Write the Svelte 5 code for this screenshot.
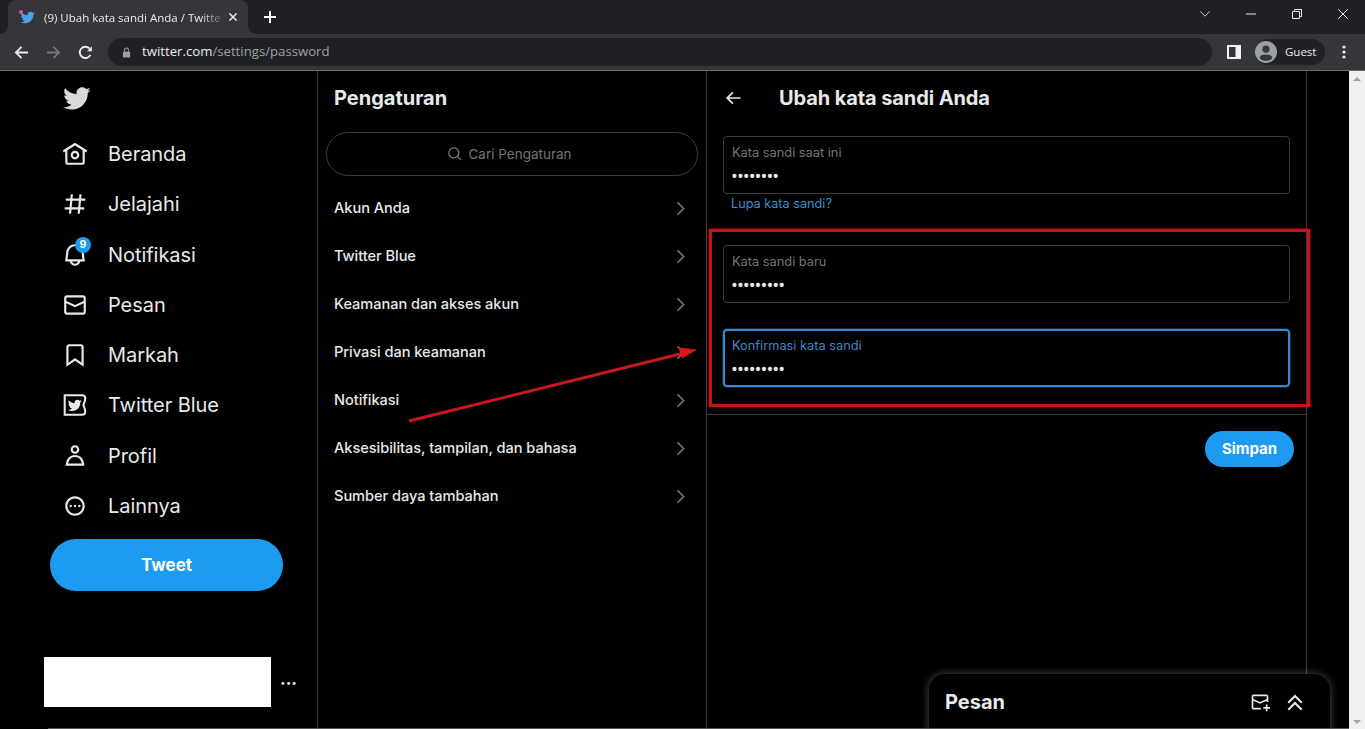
<script>
  const bird = "M23.643 4.937c-.835.37-1.732.62-2.675.733.962-.576 1.7-1.49 2.048-2.578-.9.534-1.897.922-2.958 1.13-.85-.904-2.06-1.47-3.4-1.47-2.572 0-4.658 2.086-4.658 4.66 0 .364.042.718.12 1.06-3.873-.195-7.304-2.05-9.602-4.868-.4.69-.63 1.49-.63 2.342 0 1.616.823 3.043 2.072 3.878-.764-.025-1.482-.234-2.11-.583v.06c0 2.257 1.605 4.14 3.737 4.568-.392.106-.803.162-1.227.162-.3 0-.593-.028-.877-.082.593 1.85 2.313 3.198 4.352 3.234-1.595 1.25-3.604 1.995-5.786 1.995-.376 0-.747-.022-1.112-.065 2.062 1.323 4.51 2.093 7.14 2.093 8.57 0 13.255-7.098 13.255-13.254 0-.2-.005-.402-.014-.602.91-.658 1.7-1.477 2.323-2.41z";
  const nav = [
    { label: "Beranda", d: "M12 9c-2.209 0-4 1.791-4 4s1.791 4 4 4 4-1.791 4-4-1.791-4-4-4zm0 6c-1.105 0-2-.895-2-2s.895-2 2-2 2 .895 2 2-.895 2-2 2zm0-13.304L.622 8.807l1.06 1.696L3 9.679V19.5C3 20.881 4.119 22 5.5 22h13c1.381 0 2.5-1.119 2.5-2.5V9.679l1.318.824 1.06-1.696L12 1.696zM19 19.5c0 .276-.224.5-.5.5h-13c-.276 0-.5-.224-.5-.5V8.429l7-4.375 7 4.375V19.5z" },
    { label: "Jelajahi", d: "M10.09 3.098L9.72 7h5.99l.39-4.089 1.99.187L17.72 7h3.78v2h-3.97l-.56 6h3.53v2h-3.72l-.38 4.089-1.99-.187.36-3.902H8.78l-.38 4.089-1.99-.187L6.77 17H2.5v-2h4.46l.56-6H3.5V7h4.21l.39-4.089 1.99.187zM14.96 15l.56-6H9.53l-.56 6h5.99z" },
    { label: "Notifikasi", badge: "9", d: "M19.993 9.042C19.48 5.017 16.054 2 11.996 2s-7.49 3.021-7.999 7.051L2.866 18H7.1c.463 2.282 2.481 4 4.9 4s4.437-1.718 4.9-4h4.236l-1.143-8.958zM12 20c-1.306 0-2.417-.835-2.829-2h5.658c-.412 1.165-1.523 2-2.829 2zm-6.866-4l.847-6.698C6.364 6.272 8.941 4 11.996 4s5.627 2.268 6.013 5.295L18.864 16H5.134z" },
    { label: "Pesan", d: "M1.998 5.5c0-1.381 1.119-2.5 2.5-2.5h15c1.381 0 2.5 1.119 2.5 2.5v13c0 1.381-1.119 2.5-2.5 2.5h-15c-1.381 0-2.5-1.119-2.5-2.5v-13zm2.5-.5c-.276 0-.5.224-.5.5v2.764l8 3.638 8-3.636V5.5c0-.276-.224-.5-.5-.5h-15zm15.5 5.463l-8 3.636-8-3.638V18.5c0 .276.224.5.5.5h15c.276 0 .5-.224.5-.5v-8.037z" },
    { label: "Markah", d: "M4 4.5C4 3.12 5.119 2 6.5 2h11C18.881 2 20 3.12 20 4.5v18.44l-8-5.71-8 5.71V4.5zM6.5 4c-.276 0-.5.22-.5.5v14.56l6-4.29 6 4.29V4.5c0-.28-.224-.5-.5-.5h-11z" },
    { label: "Twitter Blue", blue: true, d: "" },
    { label: "Profil", d: "M5.651 19h12.698c-.337-1.8-1.023-3.21-1.945-4.19C15.318 13.65 13.838 13 12 13s-3.317.65-4.404 1.81c-.922.98-1.608 2.39-1.945 4.19zm.486-5.56C7.627 11.85 9.648 11 12 11s4.373.85 5.863 2.44c1.477 1.58 2.366 3.8 2.632 6.46l.11 1.1H3.395l.11-1.1c.266-2.66 1.155-4.88 2.632-6.46zM12 4c-1.105 0-2 .9-2 2s.895 2 2 2 2-.9 2-2-.895-2-2-2zM8 6c0-2.21 1.791-4 4-4s4 1.79 4 4-1.791 4-4 4-4-1.79-4-4z" },
    { label: "Lainnya", more: true, d: "M3 12c0-4.97 4.029-9 9-9s9 4.03 9 9-4.029 9-9 9-9-4.03-9-9zm9-7c-3.866 0-7 3.13-7 7s3.134 7 7 7 7-3.13 7-7-3.134-7-7-7z" }
  ];
  const settings = ["Akun Anda", "Twitter Blue", "Keamanan dan akses akun", "Privasi dan keamanan", "Notifikasi", "Aksesibilitas, tampilan, dan bahasa", "Sumber daya tambahan"];
</script>

<div class="window">
  <div class="tabstrip">
    <div class="tab">
      <span class="favicon">
        <svg viewBox="0 0 24 24" width="15" height="15"><path fill="#4aa3e8" d={bird} /></svg>
        <i class="dot"></i>
      </span>
      <span class="tabtitle">(9) Ubah kata sandi Anda / Twitte</span>
      <svg class="tabx" viewBox="0 0 8 8" width="8" height="8"><path d="M.4.4l7.2 7.2M7.6.4L.4 7.6" stroke="#e8eaed" stroke-width="1.5" /></svg>
    </div>
    <svg class="newtab" viewBox="0 0 12 12" width="12" height="12"><path d="M6 0v12M0 6h12" stroke="#fff" stroke-width="2" /></svg>
    <div class="winctl">
      <svg viewBox="0 0 10 6" width="10" height="6"><path d="M.4.4L5 5.2 9.6.4" fill="none" stroke="#c4c7c9" stroke-width="1" /></svg>
      <svg viewBox="0 0 10 2" width="10" height="2"><path d="M0 1h10" stroke="#e8eaed" stroke-width="1" /></svg>
      <svg viewBox="0 0 10 10" width="10" height="10"><path d="M.5 2.5h7v7h-7zM2.5 2.5v-2h7v7h-2" fill="none" stroke="#e8eaed" stroke-width="1" /></svg>
      <svg viewBox="0 0 10 10" width="10" height="10"><path d="M.2.2l9.6 9.6M9.8.2L.2 9.8" stroke="#e8eaed" stroke-width="1" /></svg>
    </div>
  </div>
  <div class="toolbar">
    <svg class="tool" viewBox="0 0 16 16" width="15" height="15"><path d="M15 8H2M8 2L2 8l6 6" fill="none" stroke="#e8eaed" stroke-width="1.9" /></svg>
    <svg class="tool" viewBox="0 0 16 16" width="15" height="15"><path d="M1 8h13M8 2l6 6-6 6" fill="none" stroke="#75777a" stroke-width="1.9" /></svg>
    <svg class="tool" viewBox="0 0 16 16" width="15" height="15"><path d="M13.3 10.5A6 6 0 1 1 12.3 3.8" fill="none" stroke="#e8eaed" stroke-width="2" /><path d="M9.6 6.6h5.2V1.4z" fill="#e8eaed" /></svg>
    <div class="omnibox">
      <svg viewBox="0 0 10 12" width="9" height="11"><path d="M1 5h8v6.5H1z" fill="#9aa0a6" /><path d="M2.8 5V3.2a2.2 2.2 0 0 1 4.4 0V5" fill="none" stroke="#9aa0a6" stroke-width="1.2" /></svg>
      <span class="url"><b>twitter.com</b>/settings/password</span>
    </div>
    <svg class="panelbtn" viewBox="0 0 14 14" width="14" height="14"><path d="M0 0h14v14H0z" fill="#f1f3f4" /><path d="M2 2h6.5v10H2z" fill="#35363a" /></svg>
    <div class="guest">
      <svg viewBox="0 0 22 22" width="22" height="22"><circle cx="11" cy="11" r="11" fill="#9aa0a6" /><circle cx="11" cy="8.2" r="3.6" fill="#35363a" /><ellipse cx="11" cy="16.6" rx="6.2" ry="3.2" fill="#35363a" /></svg>
      <span>Guest</span>
    </div>
    <svg class="dots" viewBox="0 0 4 14" width="4" height="14"><circle cx="2" cy="2" r="1.6" fill="#e8eaed" /><circle cx="2" cy="7" r="1.6" fill="#e8eaed" /><circle cx="2" cy="12" r="1.6" fill="#e8eaed" /></svg>
  </div>

  <div class="viewport">
    <div class="page">
      <aside class="sidebar">
        <svg class="logo" viewBox="0 0 24 24" width="29" height="29"><path fill="#d9d9d9" d={bird} /></svg>
        <nav>
          {#each nav as item}
            <div class="navitem">
              <span class="navicon">
                {#if item.blue}
                  <svg viewBox="0 0 24 24" width="26" height="26">
                    <path d="M2.5 3H18.5c2 0 3 1.4 3 3 0 2-1 4-1.8 6 .8 2 1.8 4 1.8 6 0 1.6-1 3-3 3H2.5z" fill="none" stroke="#e7e9ea" stroke-width="1.9" />
                    <g transform="translate(4.9 5.6) scale(.56)"><path fill="#e7e9ea" d={bird} /></g>
                  </svg>
                {:else}
                  <svg viewBox="0 0 24 24" width="26" height="26">
                    <path fill="#e7e9ea" d={item.d} />
                    {#if item.more}
                      <circle cx="8" cy="12" r="1.1" fill="#e7e9ea" /><circle cx="12" cy="12" r="1.1" fill="#e7e9ea" /><circle cx="16" cy="12" r="1.1" fill="#e7e9ea" />
                    {/if}
                  </svg>
                {/if}
                {#if item.badge}<i class="badge">{item.badge}</i>{/if}
              </span>
              <span class="navlabel">{item.label}</span>
            </div>
          {/each}
        </nav>
        <div class="tweet">Tweet</div>
        <div class="account">
          <div class="redacted"></div>
          <span class="ellipsis">···</span>
        </div>
      </aside>

      <section class="middle">
        <h2 class="midtitle">Pengaturan</h2>
        <div class="search">
          <svg viewBox="0 0 24 24" width="16" height="16"><path d="M10.25 3.75a6.5 6.5 0 1 0 0 13 6.5 6.5 0 0 0 0-13zM1.75 10.25a8.5 8.5 0 1 1 15.1 5.36l4.9 4.9-1.41 1.41-4.9-4.9A8.5 8.5 0 0 1 1.75 10.25z" fill="#71767b" /></svg>
          <span>Cari Pengaturan</span>
        </div>
        <ul class="list">
          {#each settings as s}
            <li>
              <span>{s}</span>
              <svg viewBox="0 0 24 24" width="19" height="19"><path d="M14.586 12L7.543 4.96l1.414-1.42L17.414 12l-8.457 8.46-1.414-1.42L14.586 12z" fill="#71767b" /></svg>
            </li>
          {/each}
        </ul>
      </section>

      <section class="detail">
        <header class="dhead">
          <svg viewBox="0 0 24 24" width="20" height="20"><path d="M7.414 13l5.043 5.04-1.414 1.42L3.586 12l7.457-7.46 1.414 1.42L7.414 11H21v2H7.414z" fill="#e7e9ea" /></svg>
          <h2>Ubah kata sandi Anda</h2>
        </header>
        <div class="form">
          <div class="field">
            <label for="p1">Kata sandi saat ini</label>
            <span id="p1" class="pw">••••••••</span>
          </div>
          <a class="forgot" href="#top">Lupa kata sandi?</a>
          <div class="field second">
            <label for="p2">Kata sandi baru</label>
            <span id="p2" class="pw">•••••••••</span>
          </div>
          <div class="field focus">
            <label for="p3">Konfirmasi kata sandi</label>
            <span id="p3" class="pw">•••••••••</span>
          </div>
        </div>
        <div class="actions"><div class="save">Simpan</div></div>
      </section>
    </div>
    <div class="scrollbar">
      <i class="up"></i>
      <i class="down"></i>
    </div>
  </div>

  <div class="drawer">
    <h3>Pesan</h3>
    <svg class="compose" viewBox="0 0 24 24" width="20" height="20"><path d="M1.998 5.5c0-1.381 1.119-2.5 2.5-2.5h15c1.381 0 2.5 1.119 2.5 2.5V12h-2v-1.537l-8 3.635-8-3.635V18.5c0 .276.224.5.5.5H13v2H4.498c-1.381 0-2.5-1.119-2.5-2.5v-13zm2 2.766l8 3.635 8-3.635V5.5c0-.276-.224-.5-.5-.5h-15c-.276 0-.5.224-.5.5v2.766zM19 18v-3h2v3h3v2h-3v3h-2v-3h-3v-2h3z" fill="#e7e9ea" /></svg>
    <svg viewBox="0 0 24 24" width="24" height="24"><path d="M12 3.59l7.457 7.45-1.414 1.42L12 6.41l-6.043 6.05-1.414-1.42L12 3.59zm0 7l7.457 7.45-1.414 1.42L12 13.41l-6.043 6.05-1.414-1.42L12 10.59z" fill="#e7e9ea" /></svg>
  </div>

  <div class="redbox"></div>
  <svg class="arrow" viewBox="0 0 1365 729" width="1365" height="729">
    <path d="M409 421L682 353.5" stroke="#c8181b" stroke-width="3" />
    <path d="M697 349.5L678.5 347.5 682 358.5z" fill="#d9161a" />
  </svg>
  <div class="edge"></div>
</div>

<style>
  :global(body) { margin: 0; background: #000; }
  .window {
    position: relative;
    width: 1365px;
    height: 729px;
    overflow: hidden;
    display: flex;
    flex-direction: column;
    background: #000;
    font-family: Inter, "Liberation Sans", sans-serif;
    color: #e7e9ea;
  }
  .tabstrip {
    height: 34px;
    flex: none;
    background: #202124;
    display: flex;
    align-items: center;
    padding-left: 8px;
    box-sizing: border-box;
  }
  .tab {
    position: relative;
    width: 240px;
    height: 34px;
    flex: none;
    background: #35363a;
    border-radius: 8px 8px 0 0;
    display: flex;
    align-items: center;
    padding: 0 12px;
    box-sizing: border-box;
  }
  .tab::before, .tab::after {
    content: "";
    position: absolute;
    bottom: 0;
    width: 8px;
    height: 8px;
  }
  .tab::before { left: -8px; background: radial-gradient(circle at 0 0, transparent 7.5px, #35363a 8px); }
  .tab::after { right: -8px; background: radial-gradient(circle at 100% 0, transparent 7.5px, #35363a 8px); }
  .favicon { position: relative; display: flex; width: 15px; margin-right: 9px; }
  .dot {
    position: absolute; left: -1px; top: 0; width: 4px; height: 4px;
    border-radius: 50%; background: #d9558f;
  }
  .tabtitle {
    flex: 1;
    white-space: nowrap;
    font: 11.5px "Open Sans", "Noto Sans", sans-serif;
    color: #e8eaed;
    -webkit-mask-image: linear-gradient(90deg, #000 88%, rgba(0, 0, 0, .25));
    mask-image: linear-gradient(90deg, #000 88%, rgba(0, 0, 0, .25));
  }
  .tabx { margin-left: 8px; flex: none; }
  .newtab { margin-left: 16px; flex: none; }
  .winctl {
    margin-left: auto;
    height: 14px;
    display: flex;
    align-items: center;
    gap: 36px;
    padding-right: 17px;
    margin-top: -6px;
  }
  .toolbar {
    height: 36px;
    flex: none;
    background: #35363a;
    border-bottom: 1px solid #6a6b6e;
    display: flex;
    align-items: center;
    padding-left: 14px;
  }
  .tool { margin-right: 17px; flex: none; }
  .omnibox {
    margin-left: -2px;
    width: 1104px;
    height: 28px;
    border-radius: 14px;
    background: #202124;
    display: flex;
    align-items: center;
    padding-left: 14px;
    gap: 11px;
    box-sizing: border-box;
    flex: none;
  }
  .url { font: 13.2px "Open Sans", "Noto Sans", sans-serif; color: #9aa0a6; margin-top: -2px; }
  .url b { font-weight: 400; color: #e8eaed; }
  .panelbtn { margin-left: 15px; flex: none; }
  .guest {
    margin-left: 14px;
    width: 70px;
    height: 26px;
    border-radius: 13px;
    background: #202124;
    display: flex;
    align-items: center;
    gap: 8px;
    flex: none;
    font: 11.5px "Open Sans", "Noto Sans", sans-serif;
    color: #e8eaed;
  }
  .guest span { margin-top: -1px; }
  .dots { margin-left: 17px; flex: none; }
  .viewport { flex: 1; min-height: 0; display: flex; }
  .page { flex: 1; min-width: 0; display: flex; }
  .scrollbar {
    width: 16px;
    flex: none;
    background: #f1f1f1;
    display: flex;
    flex-direction: column;
    justify-content: space-between;
    align-items: center;
    padding: 6px 0 5px;
    box-sizing: border-box;
  }
  .up, .down { width: 0; height: 0; border-left: 4px solid transparent; border-right: 4px solid transparent; }
  .up { border-bottom: 4px solid #a3a3a3; }
  .down { border-top: 4px solid #a3a3a3; }

  .sidebar {
    flex: none;
    border-right: 1px solid #383b3e;
    display: flex;
    flex-direction: column;
    padding: 0 34px 0 44px;
    box-sizing: border-box;
    width: 318px;
  }
  .logo { margin: 13px 0 0 17.5px; flex: none; }
  nav { margin-top: 15.8px; margin-bottom: .2px; }
  .navitem {
    height: 50.3px;
    display: flex;
    align-items: center;
    padding-left: 18px;
  }
  .navicon { position: relative; display: flex; width: 26px; margin-right: 20px; }
  .navlabel { font-size: 20px; font-weight: 400; white-space: nowrap; letter-spacing: -.05px; }
  .badge {
    position: absolute;
    left: 13px;
    top: -5px;
    width: 16px;
    height: 16px;
    border-radius: 50%;
    background: #1d9bf0;
    color: #fff;
    font: 700 10.5px/16px Inter, sans-serif;
    text-align: center;
  }
  .tweet {
    margin: 8px 0 0 6px;
    width: 233px;
    height: 52px;
    flex: none;
    border-radius: 26px;
    background: #1d9bf0;
    color: #fff;
    font-weight: 700;
    font-size: 17px;
    display: flex;
    align-items: center;
    justify-content: center;
  }
  .account {
    margin-top: 66px;
    display: flex;
    align-items: center;
  }
  .redacted { width: 227px; height: 50px; background: #fff; flex: none; }
  .ellipsis { margin: 3px 0 0 9px; font-size: 17px; font-weight: 700; line-height: 1; white-space: nowrap; }

  .middle {
    width: 389px;
    flex: none;
    box-sizing: border-box;
    border-right: 1px solid #383b3e;
  }
  .midtitle {
    margin: 0;
    height: 53px;
    padding-left: 16px;
    font-size: 20px;
    font-weight: 700;
    line-height: 55px;
  }
  .search {
    margin: 8px;
    height: 44px;
    border: 1px solid #3a3d40;
    border-radius: 22px;
    padding-right: 5px;
    display: flex;
    align-items: center;
    justify-content: center;
    gap: 5px;
    box-sizing: border-box;
    font-size: 13.5px;
    color: #71767b;
  }
  .search span { margin-top: 0; }
  .list { list-style: none; margin: 0; padding: 0; }
  .list li {
    height: 48px;
    display: flex;
    align-items: center;
    justify-content: space-between;
    padding: 0 16px;
    font-size: 14.6px;
    font-weight: 500;
    letter-spacing: -.05px;
  }
  .list li span { margin-top: 0; }

  .detail {
    width: 600px;
    flex: none;
    box-sizing: border-box;
    border-right: 1px solid #383b3e;
  }
  .dhead {
    height: 53px;
    display: flex;
    align-items: center;
    padding-left: 16px;
  }
  .dhead h2 { margin: 0 0 0 36px; font-size: 20px; font-weight: 700; letter-spacing: -.1px; }
  .form {
    padding: 12px 16px 27px;
    border-bottom: 1px solid #383b3e;
  }
  .field {
    height: 58px;
    box-sizing: border-box;
    border: 1px solid #3a3d40;
    border-radius: 4px;
    padding: 8px 8px 0;
    display: flex;
    flex-direction: column;
  }
  .field label { font-size: 12.8px; line-height: 16px; color: #71767b; }
  .pw { margin-top: 5px; font: 700 14px/20px "Liberation Sans", sans-serif; letter-spacing: 1px; color: #e7e9ea; }
  .second { margin-top: 34px; }
  .focus { margin-top: 26px; border: 2px solid #3e87c7; padding: 7px 7px 0; box-shadow: 0 0 0 .5px rgba(62, 135, 199, .6); }
  .focus label { color: #3e87c7; }
  .forgot { display: block; margin: 2px 0 0 8px; height: 15px; font-size: 12.7px; line-height: 15px; color: #3a8fd1; text-decoration: none; }
  .actions { display: flex; justify-content: flex-end; padding: 16px 12px 0; }
  .save {
    width: 89px;
    height: 36px;
    padding-bottom: 1px;
    box-sizing: border-box;
    border-radius: 18px;
    background: #1d9bf0;
    color: #fff;
    font-weight: 700;
    font-size: 15px;
    display: flex;
    align-items: center;
    justify-content: center;
  }

  .drawer {
    position: absolute;
    left: 929px;
    top: 674px;
    width: 401px;
    height: 60px;
    box-sizing: border-box;
    background: #000;
    border-radius: 16px 16px 0 0;
    box-shadow: 0 0 8px rgba(255, 255, 255, .3);
    display: flex;
    align-items: flex-start;
    padding: 17px 23px 0 16px;
    gap: 13px;
  }
  .drawer h3 { margin: -1px auto 0 0; font-size: 20px; line-height: 24px; font-weight: 700; }
  .compose { margin-top: 1px; }
  .redbox {
    position: absolute;
    left: 709px;
    top: 229px;
    width: 601px;
    height: 178px;
    box-sizing: border-box;
    border: 3px solid #c4161a;
    box-shadow: 0 0 3px rgba(230, 20, 20, .8);
  }
  .arrow { position: absolute; left: 0; top: 0; pointer-events: none; }
  .edge {
    position: absolute;
    left: 48px;
    top: 728px;
    width: 1301px;
    height: 1px;
    background: #555;
  }
</style>
